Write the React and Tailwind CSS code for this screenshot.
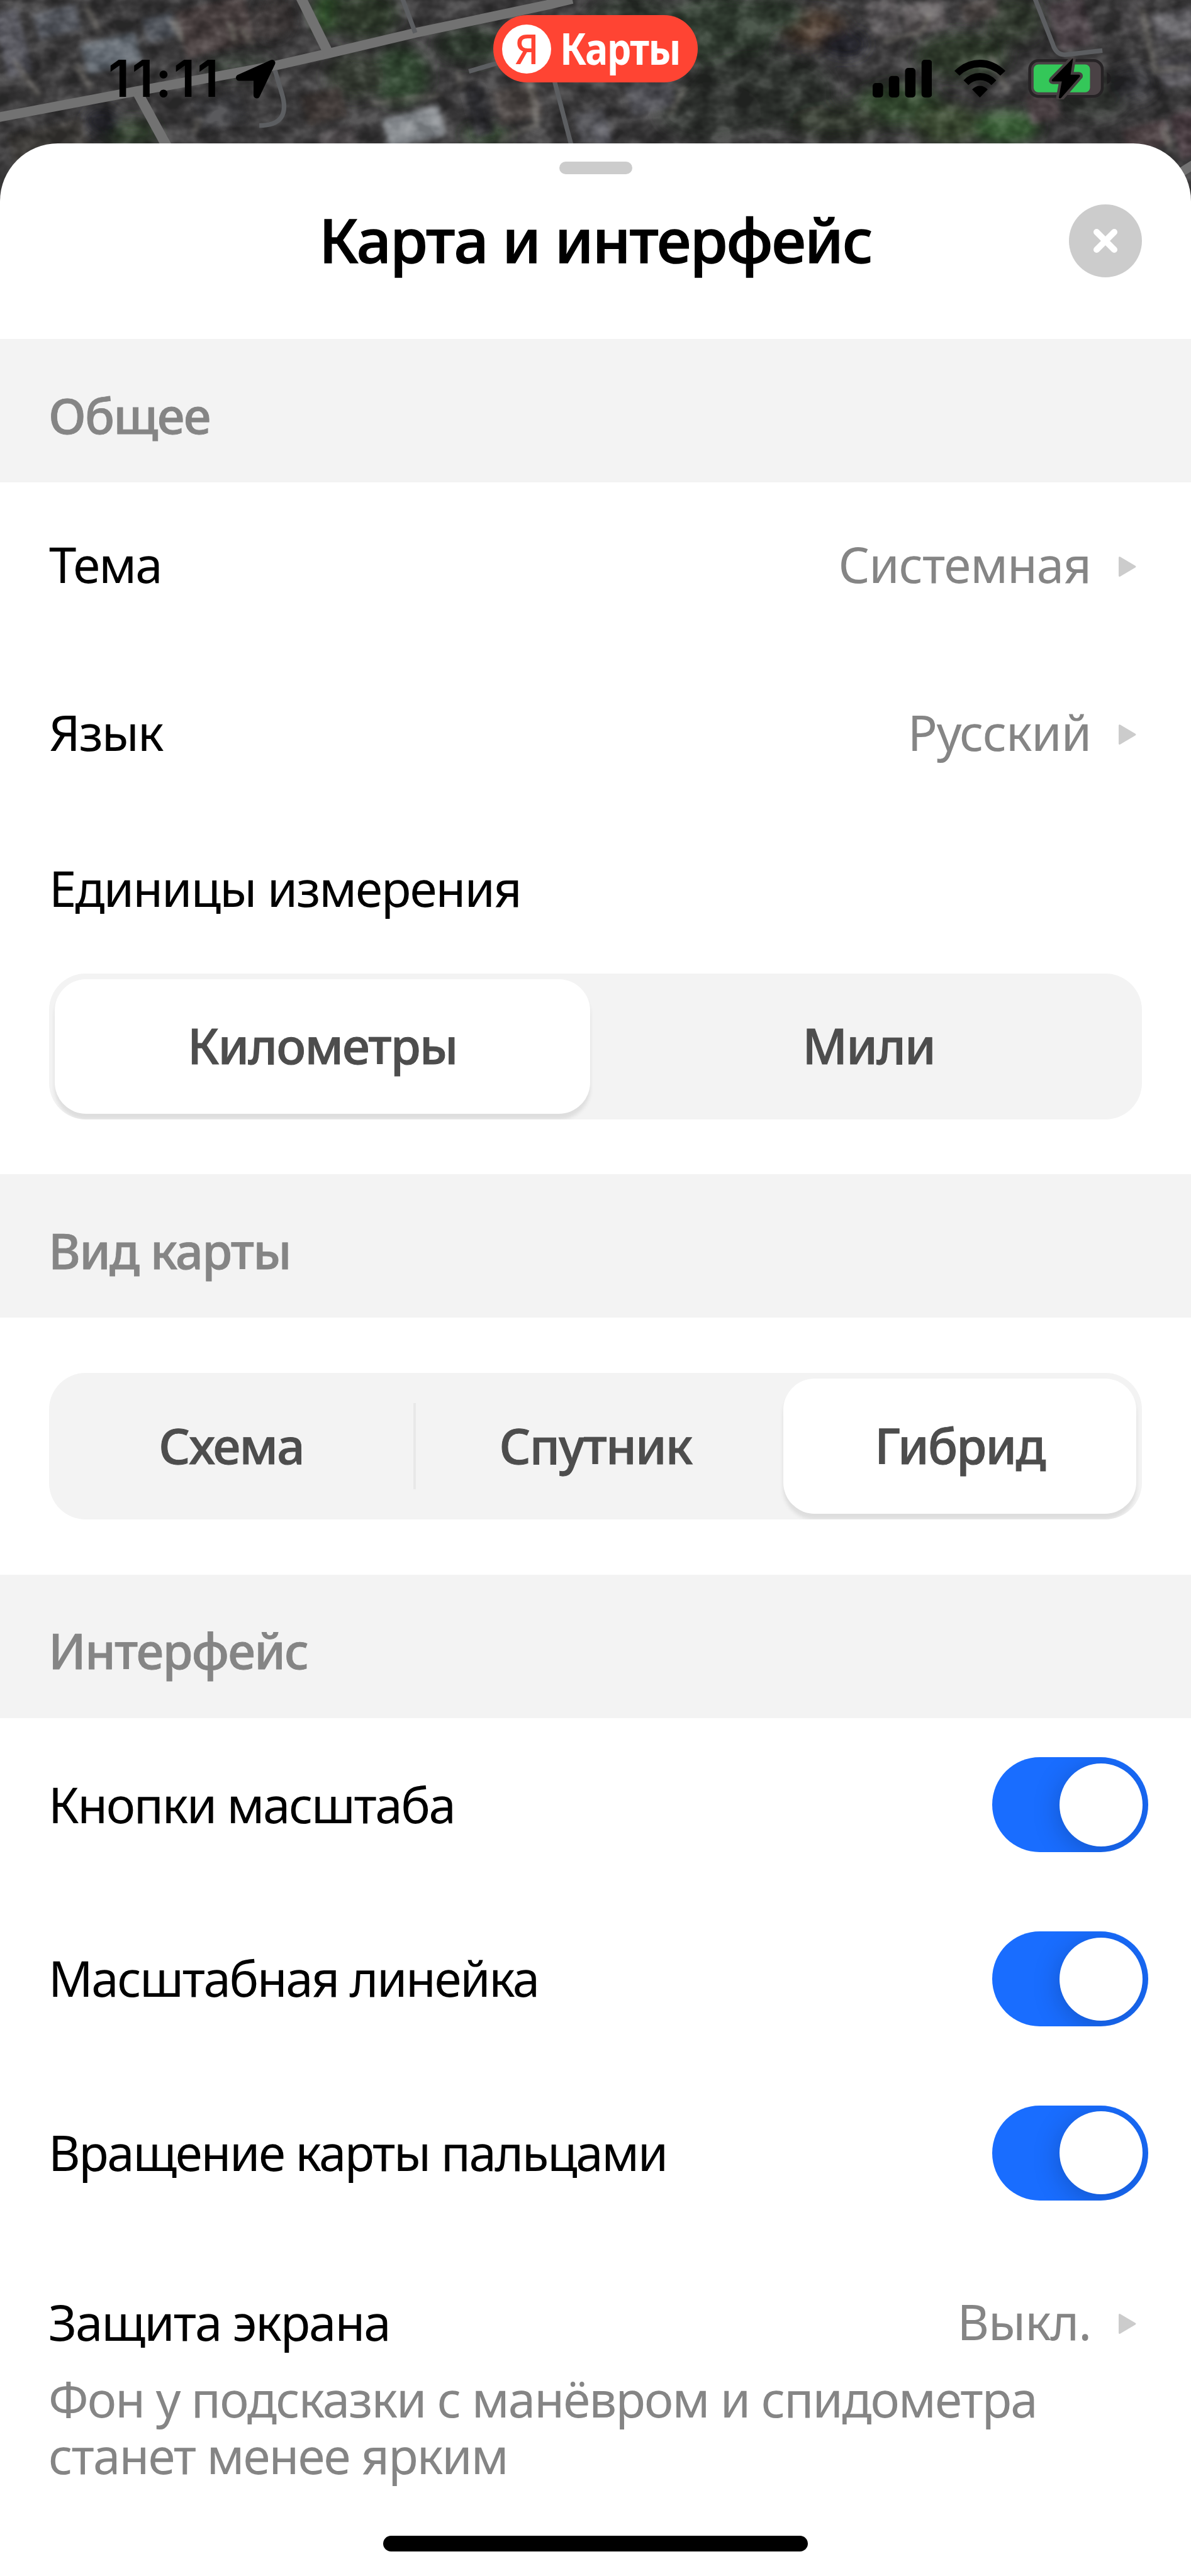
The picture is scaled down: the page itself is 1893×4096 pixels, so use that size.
import { useState } from 'react';
import clsx from 'clsx';

// x, y, width, height, colour of the blocks seen from above
const roofs = [
    [0, 20, 50, 130, '#5c5c64'], [70, 18, 85, 50, '#5b5e66'], [165, 75, 110, 60, '#666d75'], [285, 30, 60, 48, '#4e5159'],
    [355, 5, 140, 95, '#4a413f'], [500, 10, 80, 60, '#423e3d'], [20, 250, 150, 60, '#433f3d'], [390, 190, 90, 60, '#3c3c41'],
    [600, 180, 80, 60, '#48423f'], [760, 220, 115, 62, '#8d9195'], [630, 255, 70, 40, '#504c4e'], [980, 170, 85, 70, '#514b4a'],
    [925, 170, 40, 100, '#2f2e31'], [1140, 220, 60, 60, '#5c5c61'], [1240, 160, 90, 60, '#505055'], [1175, 240, 30, 50, '#67686e'],
    [1715, 0, 60, 70, '#575355'], [1785, 5, 80, 60, '#615c5d'], [1900, 0, 70, 40, '#544f4e'], [2080, 0, 70, 95, '#494144'],
    [2210, 0, 60, 60, '#504d4f'], [2280, 20, 80, 60, '#636266'], [2290, 110, 70, 60, '#525156'], [2220, 245, 90, 50, '#4b3f43'],
    [2030, 180, 60, 60, '#463e41'], [2320, 220, 50, 90, '#473a3f'],
];

const trees = [
    [256, 262, 50, 22, '#303f2e'], [648, 24, 24, 34, '#395c33'], [720, 30, 60, 40, '#323d2f'], [790, 150, 50, 50, '#334730'],
    [700, 150, 50, 40, '#353a32'], [930, 90, 60, 30, '#333d31'], [470, 130, 60, 20, '#333830'], [1250, 60, 90, 60, '#313830'],
    [1420, 60, 100, 60, '#333c30'], [1608, 56, 55, 32, '#504135'], [1500, 180, 130, 70, '#2f332f'], [1669, 87, 40, 26, '#28272d'],
    [1774, 208, 75, 36, '#33472e'], [1985, 251, 60, 28, '#345831'], [1870, 245, 55, 34, '#3a4930'], [1900, 110, 80, 40, '#313c2f'],
    [2160, 190, 60, 40, '#313530'], [2238, 165, 40, 30, '#2e2d32'], [960, 265, 40, 12, '#365031'], [200, 240, 30, 24, '#2a2c31'],
    [540, 30, 30, 40, '#393534'], [1650, 240, 80, 30, '#30372f'], [2000, 40, 50, 40, '#343d31'], [1520, 30, 60, 30, '#323c30'],
    [1400, 220, 90, 50, '#333631'],
];

const highlights = [
    'M170 10l25 50M28 120l50 70M150 130l30 45M340 40l20 40', 'M455 45l10 40m10-30l25 35', 'M1045 160l16 85l-75 30', 'M730 205l140-18',
    'M1744 82l75-17l18-40', 'M1352 173l-30 55', 'M1955 110l35 70', 'M2255 15l25 125l70-8', 'M2298 255l14 40', 'M905 140l5 30M392 235l-8 30',
];

const MapBackdrop = () => (
    <svg className="absolute inset-x-0 top-0 h-[346px] w-full bg-[#3c3b3c]" viewBox="0 0 2352 430" preserveAspectRatio="none" aria-hidden="true">
        <defs>
            <filter id="soft"><feGaussianBlur stdDeviation="5" /></filter>
            <filter id="foliage" x="-5%" y="-20%" width="110%" height="140%"><feGaussianBlur stdDeviation="12" /></filter>
            <filter id="grain" x="0" y="0" width="100%" height="100%" colorInterpolationFilters="sRGB">
                <feTurbulence type="fractalNoise" baseFrequency="0.022 0.028" numOctaves="3" seed="8" />
                <feColorMatrix values="1.9 0 0 0 -0.48  1.9 0 0 0 -0.48  1.9 0 0 0 -0.48  0 0 0 0 0.45" />
            </filter>
        </defs>
        <g filter="url(#foliage)">
            {trees.map(([cx, cy, rx, ry, fill], i) => (
                <ellipse key={i} cx={cx} cy={cy} rx={rx * 1.15} ry={ry * 1.15} fill={fill} />
            ))}
        </g>
        <g filter="url(#soft)">
            {roofs.map(([x, y, w, h, fill], i) => (
                <rect key={i} x={x} y={y} width={w} height={h} fill={fill} transform={`rotate(-14 ${x + w / 2} ${y + h / 2})`} />
            ))}
            {highlights.map((d) => (
                <path key={d} d={d} fill="none" stroke="#7c7973" strokeWidth="6" />
            ))}
        </g>
        <rect width="2352" height="430" filter="url(#grain)" className="mix-blend-soft-light" />
        <g fill="none" stroke="#727272">
            <path d="M-10 233L271 180L542 130L655 104L820 65L1084 9L1130 -2" strokeWidth="19" />
            <path d="M594 -5L649 106M271 182L331 292" strokeWidth="20" />
            <path d="M2325 345L2362 322" strokeWidth="18" />
            <g stroke="#5c5e61" strokeWidth="9">
                <path d="M794 -5L820 65M543 139L557 186Q575 248 512 248" />
                <path d="M926 141L985 124M1095 160L1129 290" />
                <path d="M2043 -5L2079 87Q2086 110 2106 108L2177 100" />
            </g>
        </g>
    </svg>
);

const StatusBar = () => (
    <div className="relative flex h-[228px] items-center justify-between pt-[22px] pr-[127px] pl-[172px]">
        <div className="flex items-center">
            <span className="w-[202px] font-['Inter',sans-serif] text-[81px] leading-none font-semibold tracking-[3.200px] whitespace-nowrap">11:11</span>
            <svg className="h-[63px] w-[64px]" viewBox="373 95 64 63">
                <path d="M431.500 101L379 124.500L407 124.500L407 152.500Z" fill="#000" stroke="#000" strokeWidth="10" strokeLinejoin="round" />
            </svg>
        </div>

        {/* --- BRAND PILL --- */}
        <div className="absolute top-[24px] left-[784px] flex h-[107px] w-[325px] items-center rounded-full bg-[#ff4433] pl-[14px]">
            <span className="flex size-[78px] items-center justify-center rounded-full bg-white font-['Noto_Sans',sans-serif] text-[66px] leading-none font-medium text-[#ff4433]">
                <span className="scale-x-90 pb-[3px]">Я</span>
            </span>
            <span className="ml-[14px] origin-left scale-x-[0.87] pb-[3px] font-['Noto_Sans',sans-serif] text-[70px] leading-none font-bold tracking-[-1.800px] text-white">Карты</span>
        </div>

        <div className="flex items-center">
            <svg className="h-[60px] w-[94.400px]" viewBox="62 86 352 223">
                <rect x="62" y="224" width="62" height="85" rx="19" />
                <rect x="158" y="182" width="62" height="127" rx="19" />
                <rect x="254" y="134" width="62" height="175" rx="19" />
                <rect x="352" y="86" width="62" height="223" rx="19" />
            </svg>
            <svg className="ml-[36px] h-[60px] w-[81px]" viewBox="548 86 302 223">
                <path d="M548 152Q616 86 699 86Q782 86 850 152L820 180Q768 130 699 130Q630 130 578 180Z" />
                <path d="M602 208Q643 164 699 164Q755 164 796 208L767 236Q738 207 699 207Q660 207 631 236Z" />
                <path d="M653 262Q674 240 699 240Q724 240 745 262L699 309Z" />
            </svg>
            <svg className="ml-[36px] h-[66px] w-[132px]" viewBox="988 76 492 246">
                <rect x="998" y="92" width="430" height="212" rx="52" fill="#4a4245" stroke="#262325" strokeWidth="17" />
                <path d="M1456 163Q1479 175 1479 197Q1479 222 1456 232Z" fill="#1f1d1f" />
                <rect x="1021" y="115" width="334" height="165" rx="28" fill="#34c759" />
                <path d="M1252 80L1130 205Q1124 215 1136 216L1188 216L1170 312Q1176 320 1184 314L1296 186Q1298 178 1290 176L1240 176L1254 84Z" stroke="#453f40" strokeWidth="32" strokeLinejoin="round" />
                <path d="M1252 80L1130 205Q1124 215 1136 216L1188 216L1170 312Q1176 320 1184 314L1296 186Q1298 178 1290 176L1240 176L1254 84Z" />
            </svg>
        </div>
    </div>
);

const SectionHeader = ({ children }) => (
    <h2 className="flex h-[228px] items-center bg-[#f3f3f3] px-[77px] pt-[14px] font-medium tracking-[-1.800px] text-[#858585] [-webkit-text-stroke:0.8px]">{children}</h2>
);

const Value = ({ children }) => (
    <span className="flex items-center tracking-[-1.100px] text-[#858585]">
        <span className="pb-[6px]">{children}</span>
        <svg className="ml-[43px] h-[36px] w-[30px]" viewBox="0 0 30 36">
            <path d="M2.500 3.500L27 18L2.500 32.500Z" fill="#ccc" stroke="#ccc" strokeWidth="3" strokeLinejoin="round" />
        </svg>
    </span>
);

const LinkRow = ({ label, value }) => (
    <button className="flex h-[267px] w-full items-center justify-between pr-[86px] pl-[78px]">
        <span className="pb-[6px]">{label}</span>
        <Value>{value}</Value>
    </button>
);

const Segmented = ({ options, selected, onSelect }) => (
    <div className="flex h-[232.500px] gap-[18px] overflow-hidden rounded-[58px] bg-[#f3f3f3] p-[9px]">
        {options.map((option, i) => (
            <div key={option} className="relative flex flex-1 items-center">
                {i > 0 && options[i - 1] !== selected && option !== selected && (
                    <div className="absolute -left-[9px] h-[137px] w-[4px] bg-[#e8e8e8]" />
                )}
                <button
                    onClick={() => onSelect(option)}
                    className={clsx(
                        'h-full flex-1 rounded-[50px] pb-[3px] font-medium tracking-[-1.800px] text-[#4d4d4d] [-webkit-text-stroke:1px]',
                        option === selected && 'bg-white shadow-[0_9px_6px_rgba(0,0,0,0.09)]'
                    )}
                >
                    {option}
                </button>
            </div>
        ))}
    </div>
);

const ToggleRow = ({ label }) => {
    const [on, setOn] = useState(true);

    return (
        <div className="flex h-[276.700px] items-center justify-between pr-[68px] pl-[77px]">
            <span className="pb-[2px] tracking-[-2.400px]">{label}</span>
            <button
                onClick={() => setOn(!on)}
                className={clsx('flex h-[151px] w-[248px] items-center overflow-hidden rounded-full px-[9px]', on ? 'justify-end bg-[#196dff]' : 'bg-[#ccc]')}
            >
                <span className="size-[132px] rounded-full bg-white shadow-[0_8px_44px_rgba(0,0,0,0.22)]" />
            </button>
        </div>
    );
};

export default function App() {
    const [units, setUnits] = useState('Километры');
    const [view, setView] = useState('Гибрид');

    return (
        <div className="relative h-[4096px] w-[1893px] overflow-hidden bg-white font-['Noto_Sans',sans-serif] text-[78px] leading-[90.500px] tracking-[-2px] text-black">
            <MapBackdrop />
            <StatusBar />

            <main className="relative h-[3868px] rounded-t-[92px] bg-white pt-[29px]">
                <div className="mx-auto h-[20px] w-[116px] rounded-full bg-[#ccc]" />

                <header className="mb-[51px] flex h-[211px] items-center justify-between px-[78px]">
                    <div className="w-[116px]" />
                    <h1 className="pb-[5px] text-[97px] leading-none font-medium tracking-[-1.800px] [-webkit-text-stroke:1.500px]">Карта и интерфейс</h1>
                    <button className="flex size-[116px] items-center justify-center rounded-full bg-[#ccc]">
                        <svg className="size-[40px]" viewBox="0 0 40 40">
                            <path d="M6 6L34 34M34 6L6 34" stroke="#fff" strokeWidth="10" strokeLinecap="round" />
                        </svg>
                    </button>
                </header>

                <SectionHeader>Общее</SectionHeader>
                <LinkRow label="Тема" value="Системная" />
                <LinkRow label="Язык" value="Русский" />
                <div className="px-[78px] pt-[66px] pb-[87px]">
                    <p className="mb-[90px]">Единицы измерения</p>
                    <Segmented options={['Километры', 'Мили']} selected={units} onSelect={setUnits} />
                </div>

                <SectionHeader>Вид карты</SectionHeader>
                <div className="px-[78px] pt-[88px] pb-[88px]">
                    <Segmented options={['Схема', 'Спутник', 'Гибрид']} selected={view} onSelect={setView} />
                </div>

                <SectionHeader>Интерфейс</SectionHeader>
                <ToggleRow label="Кнопки масштаба" />
                <ToggleRow label="Масштабная линейка" />
                <ToggleRow label="Вращение карты пальцами" />

                <div className="pt-[88px] pr-[86px] pl-[77px]">
                    <div className="flex h-[90px] items-center justify-between">
                        <span className="pb-[5px]">Защита экрана</span>
                        <Value>Выкл.</Value>
                    </div>
                    <p className="mt-[29px] tracking-[-1.900px] text-[#858585]">
                        Фон у подсказки с манёвром и спидометра
                        <br />
                        станет менее ярким
                    </p>
                </div>
                <div className="mx-auto mt-[82px] h-[25px] w-[675px] rounded-full bg-black" />
            </main>
        </div>
    );
}
